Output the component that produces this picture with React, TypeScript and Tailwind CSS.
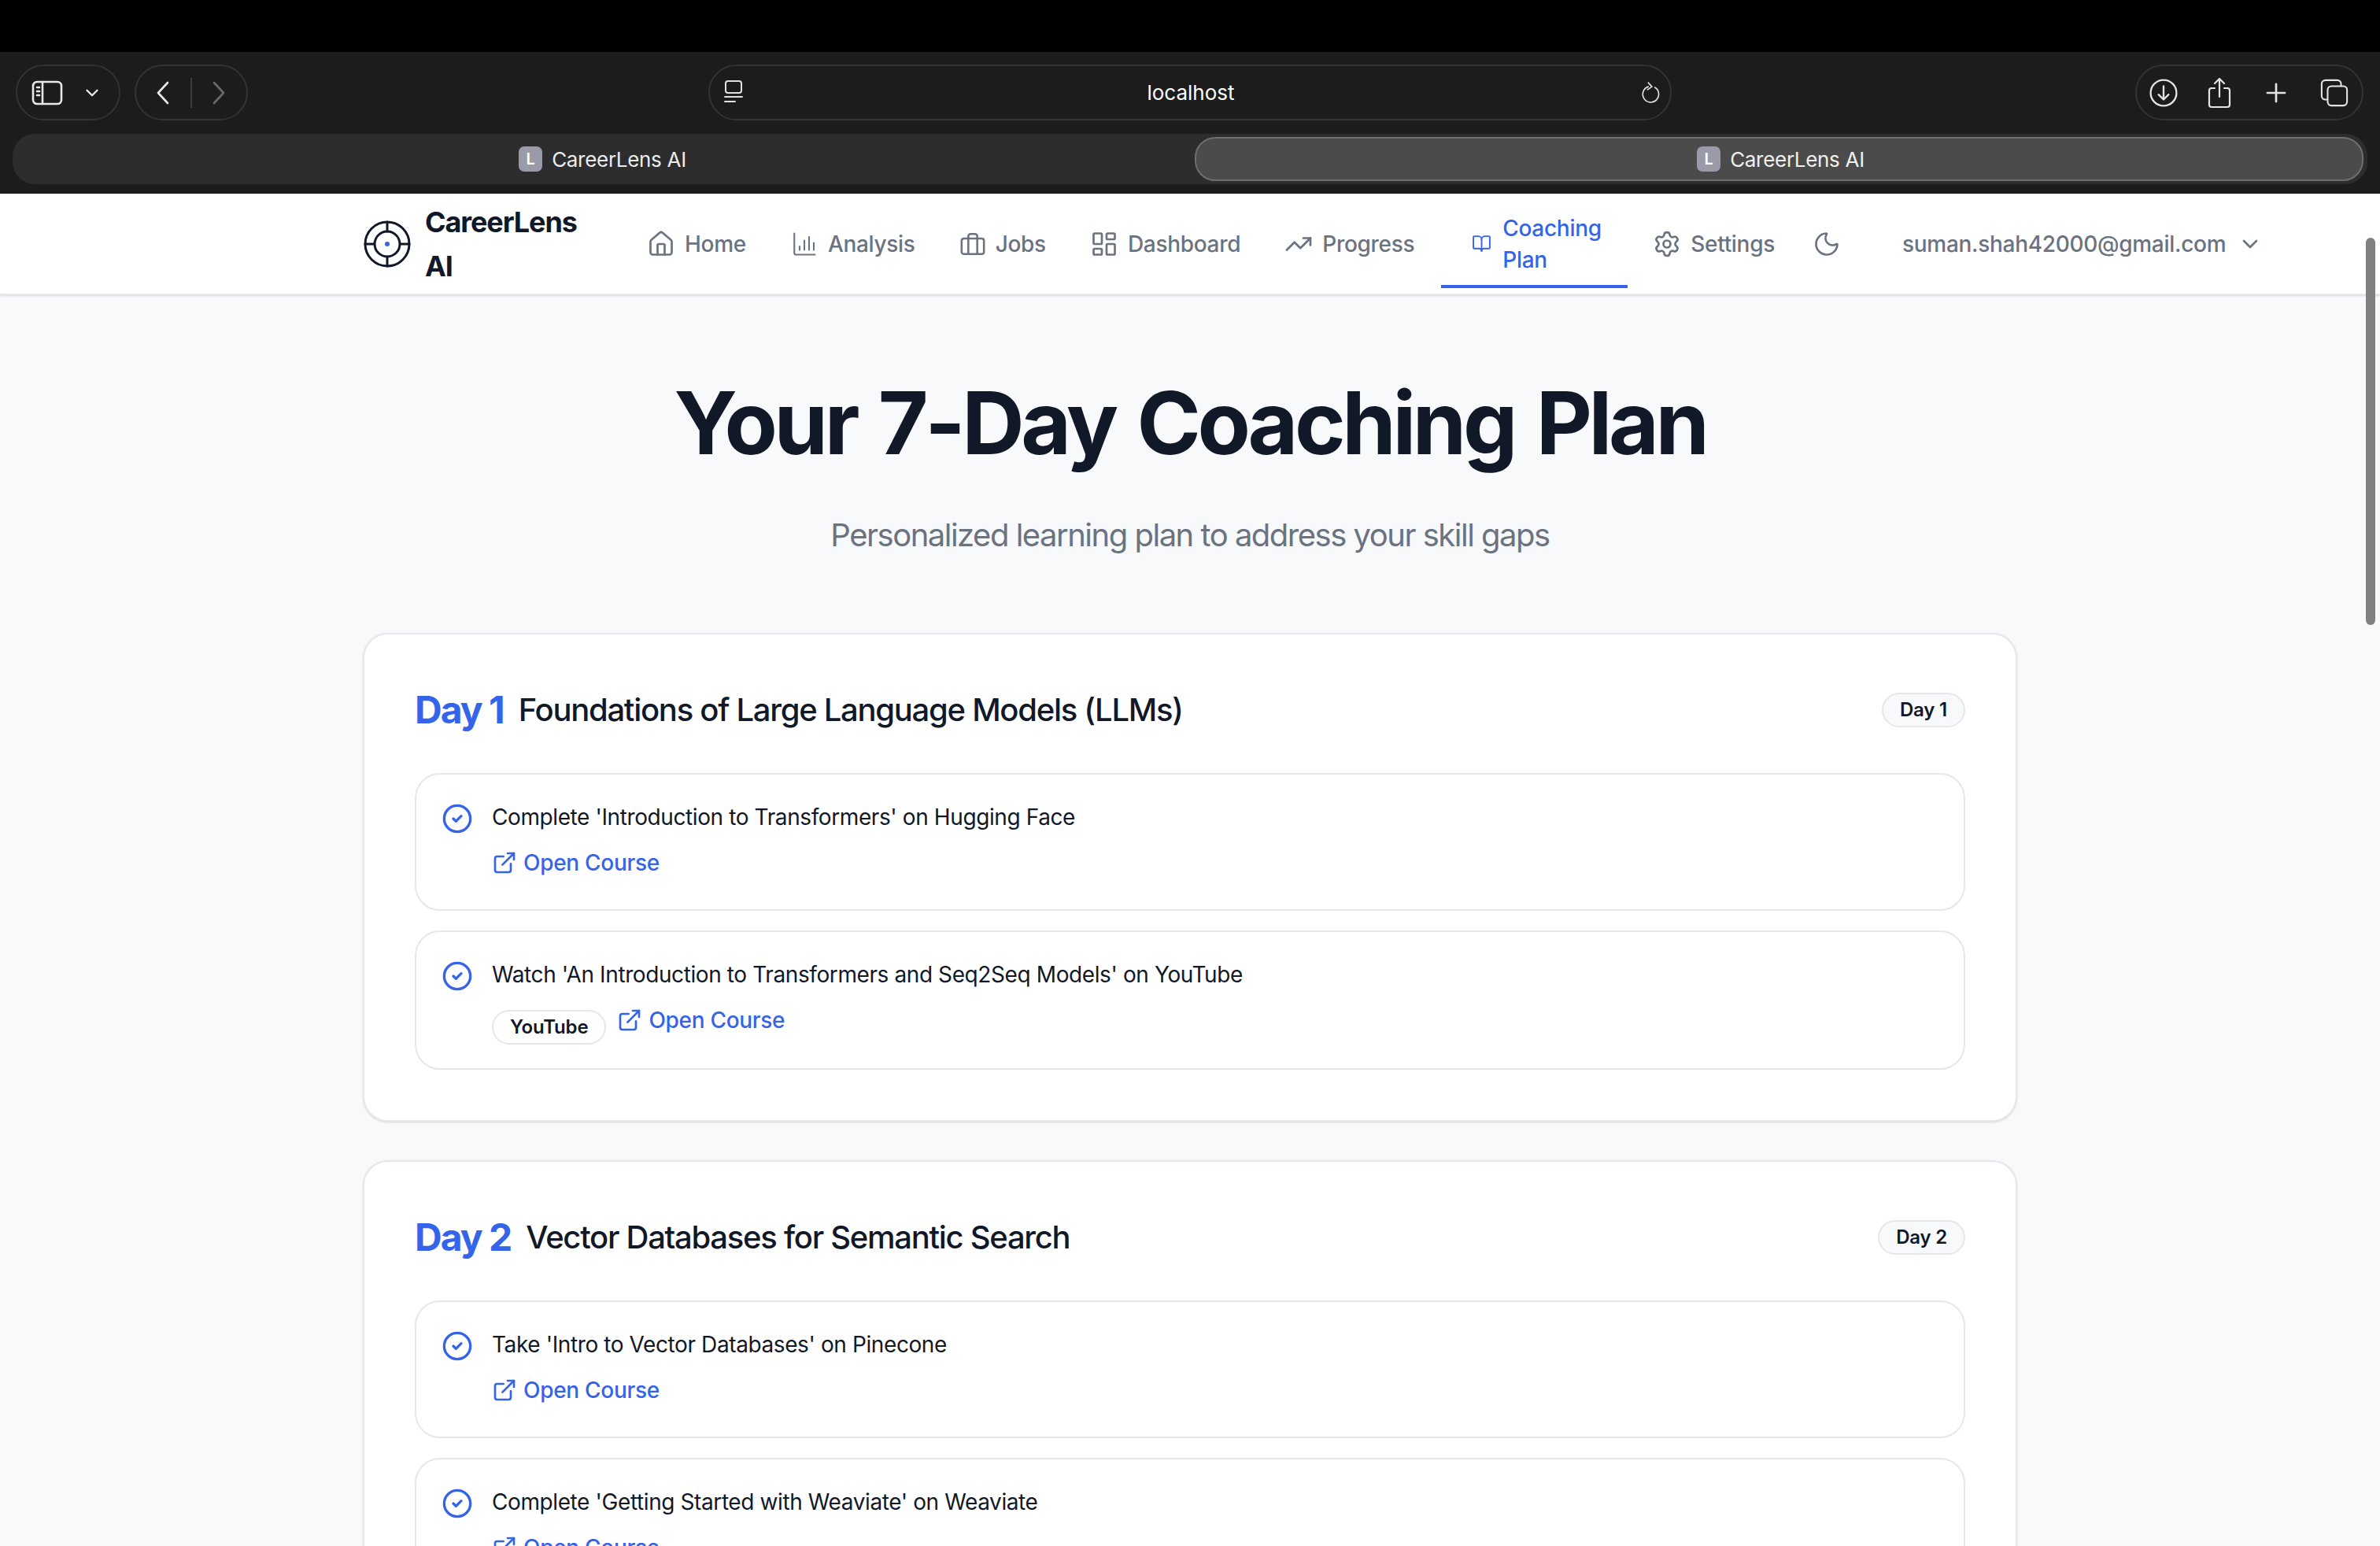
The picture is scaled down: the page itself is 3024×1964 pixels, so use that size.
import React from "react";
import { House, LayoutDashboard, TrendingUp, BookOpen, Settings, Moon, ChevronDown, CircleCheck, ExternalLink, Plus } from "lucide-react";

const sw = { fill: "none", stroke: "currentColor", strokeLinecap: "round" as const, strokeLinejoin: "round" as const };

function Logo() {
  return (
    <svg viewBox="0 0 60 60" className="w-[60px] h-[60px] shrink-0 text-[#111827]" {...sw} strokeWidth={3}>
      <circle cx="30" cy="30" r="28" />
      <circle cx="30" cy="30" r="16" />
      <path d="M30 2v12M30 46v12M2 30h11M47 30h11" />
      <circle cx="30" cy="30" r="3" fill="#3563e9" stroke="none" />
    </svg>
  );
}

function ChartIcon() {
  return (
    <svg viewBox="0 0 24 24" className="w-[36px] h-[36px] shrink-0" {...sw} strokeWidth={1.4}>
      <path d="M3.500 3v16.500a1.500 1.500 0 0 0 1.500 1.500h16" />
      <path d="M8 17v-3M12 17V9M16 17V6M20 17v-6" />
    </svg>
  );
}

function BriefcaseIcon() {
  return (
    <svg viewBox="0 0 24 24" className="w-[34px] h-[34px] shrink-0" {...sw} strokeWidth={1.8}>
      <rect x="2" y="7" width="20" height="14" rx="2" />
      <path d="M16 21V5a2 2 0 0 0-2-2h-4a2 2 0 0 0-2 2v16" />
    </svg>
  );
}

function NavItem({ icon, label }: { icon: React.ReactNode; label: string }) {
  return (
    <div className="flex items-center gap-[12px] px-[28px] text-[28px] leading-[40px] font-medium tracking-[-0.3px] text-[#6b7280] whitespace-nowrap">
      {icon}
      <span>{label}</span>
    </div>
  );
}

function SafariChrome() {
  return (
    <div className="bg-[#1c1c1c] h-[180px] flex flex-col text-white">
      <div className="flex items-center h-[71px] mt-[16px] pl-[20px] pr-[21px]">
        <div className="flex items-center w-[133px] h-[71px] rounded-[36px] border-2 border-[#333333] pl-[18px]">
          <svg viewBox="0 0 40 32" className="w-[40px] h-[32px] text-[#e8e8e8]" {...sw} strokeWidth={2.600}>
            <rect x="2" y="2" width="36" height="28" rx="5" />
            <path d="M14 2v28M7 9h3M7 14h3M7 19h3" />
          </svg>
          <ChevronDown className="w-[26px] h-[26px] ml-[24px] text-[#e8e8e8]" strokeWidth={2.2} />
        </div>
        <div className="flex items-center justify-between w-[144px] h-[71px] rounded-[36px] border-2 border-[#333333] ml-[18px] pl-[25px] pr-[26px]">
          <svg viewBox="0 0 18 30" className="w-[18px] h-[30px] text-[#e8e8e8]" {...sw} strokeWidth={2.600}>
            <path d="M15 2 3 15l12 13" />
          </svg>
          <div className="w-[2px] h-[38px] bg-[#3a3a3a]" />
          <svg viewBox="0 0 18 30" className="w-[18px] h-[30px] text-[#6a6a6a]" {...sw} strokeWidth={2.600}>
            <path d="M3 2l12 13L3 28" />
          </svg>
        </div>
        <div className="relative flex items-center justify-center w-[1224px] h-[71px] rounded-[36px] border-2 border-[#333333] ml-[585px]">
          <svg viewBox="0 0 26 30" className="absolute left-[17px] top-[17px] w-[26px] h-[30px] text-[#e0e0e0]" {...sw} strokeWidth={2}>
            <rect x="3" y="2" width="20" height="15" rx="3" />
            <path d="M2 22h22M2 28h13" />
          </svg>
          <span className="text-[26px] leading-[36px] ml-[2px] mt-[1px]">localhost</span>
          <svg viewBox="0 0 26 32" className="absolute right-[12px] top-[19px] w-[24px] h-[30px] text-[#e0e0e0]" {...sw} strokeWidth={1.800}>
            <path d="M9 7.500a11 11 0 1 0 9 1" />
            <path d="M9 2l5 5.500-6 4" />
          </svg>
        </div>
        <div className="flex items-center justify-between w-[290px] h-[71px] rounded-[36px] border-2 border-[#333333] ml-auto pl-[16px] pr-[17px] text-[#e4e4e4]">
          <svg viewBox="0 0 34 34" className="w-[36px] h-[36px]" {...sw} strokeWidth={2.200}>
            <circle cx="17" cy="17" r="15.500" />
            <path d="M17 9v16M11 19l6 6 6-6" />
          </svg>
          <svg viewBox="0 0 32 40" className="w-[32px] h-[40px]" {...sw} strokeWidth={2.200}>
            <path d="M10 14H6a3 3 0 0 0-3 3v18a3 3 0 0 0 3 3h20a3 3 0 0 0 3-3V17a3 3 0 0 0-3-3h-4" />
            <path d="M16 25V2M10 8l6-6 6 6" />
          </svg>
          <Plus className="w-[38px] h-[38px]" strokeWidth={1.700} />
          <svg viewBox="0 0 38 38" className="w-[36px] h-[36px]" {...sw} strokeWidth={2.200}>
            <rect x="2" y="2" width="26" height="26" rx="5" />
            <rect x="10" y="10" width="26" height="26" rx="5" fill="#1c1c1c" />
          </svg>
        </div>
      </div>
      <div className="relative flex h-[64px] mt-[17px] mx-[16px] w-[2992px] rounded-[28px] bg-[#2d2d2d] p-[4px] pr-[5px]">
        <div className="flex items-center justify-center gap-[12px] w-[1498px] text-[26px] tracking-[-0.3px] text-[#ececec] pr-[7px]">
          <span className="flex items-center justify-center w-[30px] h-[32px] rounded-[7px] bg-[#9a9aa8] text-[20px] font-semibold text-white">L</span>
          <span>CareerLens AI</span>
        </div>
        <div className="flex items-center justify-center gap-[12px] w-[1485px] h-[56px] rounded-[26px] bg-[#4b4b4b] border-2 border-[#6f6f6f] text-[26px] tracking-[-0.3px] text-[#f0f0f0] pl-[4px]">
          <span className="flex items-center justify-center w-[30px] h-[32px] rounded-[7px] bg-[#9a9aa8] text-[20px] font-semibold text-white">L</span>
          <span>CareerLens AI</span>
        </div>
      </div>
    </div>
  );
}

function Header() {
  return (
    <div className="flex items-center h-[129px] bg-white border-b-2 border-[#e5e7eb] shadow-sm pl-[462px]">
      <Logo />
      <div className="w-[216px] ml-[18px] text-[36px] leading-[56px] font-bold tracking-[-1.1px] text-[#111827]">CareerLens AI</div>
      <div className="flex items-center ml-[38px]">
        <NavItem icon={<House className="w-[36px] h-[36px]" strokeWidth={1.800} />} label="Home" />
        <NavItem icon={<ChartIcon />} label="Analysis" />
        <NavItem icon={<BriefcaseIcon />} label="Jobs" />
        <NavItem icon={<LayoutDashboard className="w-[36px] h-[36px]" strokeWidth={1.800} />} label="Dashboard" />
        <NavItem icon={<TrendingUp className="w-[36px] h-[36px]" strokeWidth={1.800} />} label="Progress" />
        <div className="flex items-center gap-[14px] w-[237px] h-[116px] ml-[6px] mr-[4px] pt-[8px] pl-[39px] mb-[4px] border-b-4 border-[#3563e9] text-[28px] leading-[40px] font-medium tracking-[-0.3px] text-[#3563e9]">
          <BookOpen className="w-[25px] h-[25px] shrink-0" strokeWidth={1.800} />
          <span className="w-[130px]">Coaching Plan</span>
        </div>
        <NavItem icon={<Settings className="w-[36px] h-[36px]" strokeWidth={1.800} />} label="Settings" />
        <Moon className="w-[36px] h-[36px] ml-[20px] text-[#6b7280]" strokeWidth={1.800} />
        <div className="flex items-center ml-[78px] text-[28px] leading-[40px] font-medium tracking-[-0.3px] text-[#6b7280]">
          <span>suman.shah42000@gmail.com</span>
          <ChevronDown className="w-[32px] h-[32px] ml-[15px]" strokeWidth={2} />
        </div>
      </div>
    </div>
  );
}

function Link() {
  return (
    <div className="flex items-center gap-[8px] h-[40px] text-[28px] leading-[40px] font-medium tracking-[-0.3px] text-[#3563e9]">
      <ExternalLink className="w-[32px] h-[32px]" strokeWidth={2} />
      <span>Open Course</span>
    </div>
  );
}

function Task({ text, badge }: { text: string; badge?: string }) {
  return (
    <div className="flex items-start gap-[24px] rounded-[32px] border-2 border-[#e5e7eb] bg-white pt-[34px] px-[32px] pb-[33px]">
      <CircleCheck className="w-[40px] h-[40px] mt-[2px] shrink-0 text-[#3563e9]" strokeWidth={2} />
      <div>
        <div className="text-[28px] leading-[40px] tracking-[-0.4px] text-[#111827]">{text}</div>
        <div className="flex items-start gap-[14px] mt-[18px] min-h-[46px]">
          {badge && (
            <span className="mt-[7px] mb-[-3px] flex items-center h-[44px] px-[21px] rounded-full border-2 border-[#e5e7eb] text-[24px] font-semibold tracking-[-0.2px] text-[#111827]">{badge}</span>
          )}
          <Link />
        </div>
      </div>
    </div>
  );
}

function DayCard({ day, title, tasks }: { day: string; title: string; tasks: { text: string; badge?: string }[] }) {
  return (
    <div className="rounded-[32px] border-2 border-[#e5e7eb] bg-white p-[64px] shadow-sm">
      <div className="flex items-center justify-between h-[64px]">
        <div className="flex items-center gap-[19px]">
          <span className="text-[48px] font-bold tracking-[-2px] text-[#3563e9]">{day}</span>
          <span className="text-[40px] font-medium tracking-[-1.28px] text-[#111827]">{title}</span>
        </div>
        <span className="flex items-center h-[44px] px-[21px] rounded-full border-2 border-[#e5e7eb] bg-[#f8f9fb] text-[24px] font-semibold tracking-[-0.2px] text-[#111827]">{day}</span>
      </div>
      <div className="flex flex-col gap-[25px] mt-[48px]">
        {tasks.map((t) => (
          <Task key={t.text} text={t.text} badge={t.badge} />
        ))}
      </div>
    </div>
  );
}

export default function App() {
  return (
    <div className="relative w-[3024px] h-[1964px] overflow-hidden bg-[#f8f9fb] font-['Inter',sans-serif]">
      <div className="h-[66px] bg-black" />
      <SafariChrome />
      <Header />
      <div className="w-[2102px] ml-[461px]">
        <div className="text-center mt-[96px]">
          <h1 className="text-[110px] leading-[132px] font-bold tracking-[-4.400px] [word-spacing:6px] text-[#111827]">Your 7-Day Coaching Plan</h1>
          <p className="mt-[49px] text-[40px] leading-[56px] tracking-[-1.5px] text-[#6b7280]">Personalized learning plan to address your skill gaps</p>
        </div>
        <div className="flex flex-col gap-[49px] mt-[96px]">
          <DayCard
            day="Day 1"
            title="Foundations of Large Language Models (LLMs)"
            tasks={[
              { text: "Complete 'Introduction to Transformers' on Hugging Face" },
              { text: "Watch 'An Introduction to Transformers and Seq2Seq Models' on YouTube", badge: "YouTube" },
            ]}
          />
          <DayCard
            day="Day 2"
            title="Vector Databases for Semantic Search"
            tasks={[
              { text: "Take 'Intro to Vector Databases' on Pinecone" },
              { text: "Complete 'Getting Started with Weaviate' on Weaviate" },
            ]}
          />
        </div>
      </div>
      <div className="absolute right-[6px] top-[302px] w-[12px] h-[492px] rounded-full bg-[#808080]" />
    </div>
  );
}
